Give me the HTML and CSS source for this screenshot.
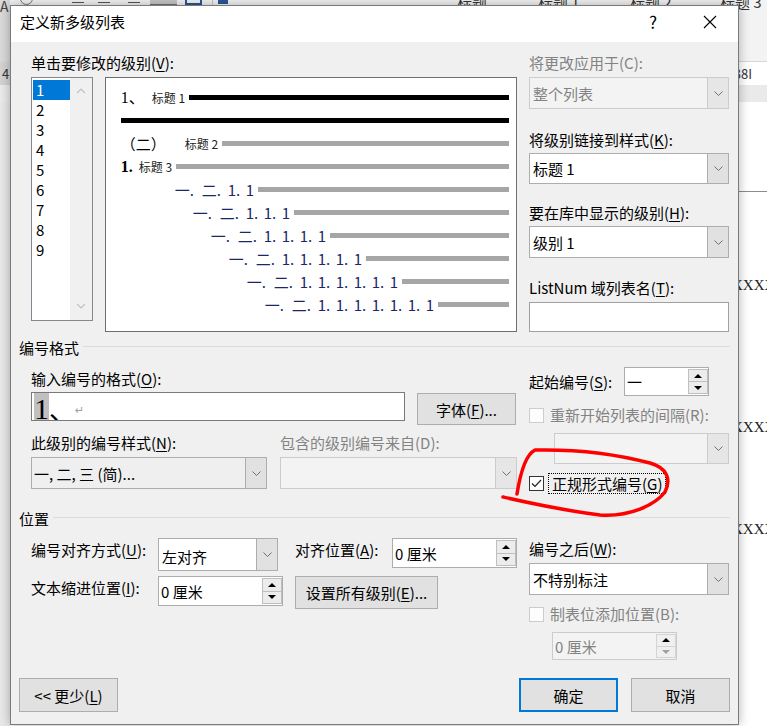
FILE: index.html
```html
<!DOCTYPE html>
<html lang="zh-CN">
<head>
    <meta charset="UTF-8">
    <meta name="viewport" content="width=device-width, initial-scale=1.0">
    <title>定义新多级列表</title>
    <link rel="stylesheet" href="styles.css">
</head>
<body>
    <!-- Word 窗口（对话框后面） -->
    <div class="word">
        <div class="ribbon">
            <span class="rb-a">A</span>
            <div class="rb-tools">
                <span class="ico-circle"></span>
                <span class="ico-line l1"></span>
                <span class="ico-line l2"></span>
                <span class="ico-line l3"></span>
                <span class="ico-box"></span>
                <span class="ico-blue"></span>
                <span class="ico-sep"></span>
                <span class="ico-arrow"></span>
            </div>
            <div class="rb-styles">
                <span class="rb-style w1">标题</span>
                <span class="rb-style w2">标题 1</span>
                <span class="rb-style w3">标题 2</span>
                <span class="rb-style">标题 3</span>
            </div>
        </div>
        <div class="tabbar">
            <span class="tab-l">4</span>
            <span class="tab-r">38I</span>
        </div>
        <div class="toolband"></div>
        <div class="doc">
            <div class="doc-rule"></div>
            <p class="doc-line first">XXXXXXXXXX</p>
            <p class="doc-line second">XXXXXXXXXX</p>
            <p class="doc-line third">XXXXXXXXXX</p>
        </div>
    </div>

    <div class="dialog">
        <div class="titlebar">
            <span class="title">定义新多级列表</span>
            <span class="help">?</span>
            <span class="close">
                <svg width="14" height="14" viewBox="0 0 14 14"><path d="M1 1L13 13M13 1L1 13" stroke="#000" stroke-width="1.1" fill="none"/></svg>
            </span>
        </div>

        <div class="dlg-body">
            <div class="sect sect-top">
                <div class="col-left">
                    <div class="lbl">单击要修改的级别(<u>V</u>):</div>
                    <div class="level-row">
                        <div class="levels">
                            <div class="lv-items">
                                <div class="lv sel">1</div>
                                <div class="lv">2</div>
                                <div class="lv">3</div>
                                <div class="lv">4</div>
                                <div class="lv">5</div>
                                <div class="lv">6</div>
                                <div class="lv">7</div>
                                <div class="lv">8</div>
                                <div class="lv">9</div>
                            </div>
                            <div class="lv-scroll">
                                <svg width="10" height="6" viewBox="0 0 10 6"><polyline points="1,5 5,1 9,5" fill="none" stroke="#c2c2c2" stroke-width="1.2"/></svg>
                                <svg width="10" height="6" viewBox="0 0 10 6"><polyline points="1,1 5,5 9,1" fill="none" stroke="#c2c2c2" stroke-width="1.2"/></svg>
                            </div>
                        </div>

                        <div class="preview">
                            <div class="pv-row">
                                <span class="pv-num n1">1、</span><span class="pv-style">标题 1</span><span class="bar black"></span>
                            </div>
                            <div class="pv-row">
                                <span class="bar black full"></span>
                            </div>
                            <div class="pv-row">
                                <span class="pv-num n2">（二）</span><span class="pv-style">标题 2</span><span class="bar"></span>
                            </div>
                            <div class="pv-row">
                                <span class="pv-num n3">1.</span><span class="pv-style">标题 3</span><span class="bar"></span>
                            </div>
                            <div class="pv-row deep d4">
                                <span class="sg cn">一.</span><span class="sg cn2">二.</span><span class="sg">1.</span><span class="sg last">1</span><span class="bar"></span>
                            </div>
                            <div class="pv-row deep d5">
                                <span class="sg cn">一.</span><span class="sg cn2">二.</span><span class="sg">1.</span><span class="sg">1.</span><span class="sg last">1</span><span class="bar"></span>
                            </div>
                            <div class="pv-row deep d6">
                                <span class="sg cn">一.</span><span class="sg cn2">二.</span><span class="sg">1.</span><span class="sg">1.</span><span class="sg">1.</span><span class="sg last">1</span><span class="bar"></span>
                            </div>
                            <div class="pv-row deep d7">
                                <span class="sg cn">一.</span><span class="sg cn2">二.</span><span class="sg">1.</span><span class="sg">1.</span><span class="sg">1.</span><span class="sg">1.</span><span class="sg last">1</span><span class="bar"></span>
                            </div>
                            <div class="pv-row deep d8">
                                <span class="sg cn">一.</span><span class="sg cn2">二.</span><span class="sg">1.</span><span class="sg">1.</span><span class="sg">1.</span><span class="sg">1.</span><span class="sg">1.</span><span class="sg last">1</span><span class="bar"></span>
                            </div>
                            <div class="pv-row deep d9">
                                <span class="sg cn">一.</span><span class="sg cn2">二.</span><span class="sg">1.</span><span class="sg">1.</span><span class="sg">1.</span><span class="sg">1.</span><span class="sg">1.</span><span class="sg">1.</span><span class="sg last">1</span><span class="bar"></span>
                            </div>
                        </div>
                    </div>
                </div>

                <div class="col-right">
                    <div class="lbl dis">将更改应用于(C):</div>
                    <div class="combo dis c1">
                        <span class="val">整个列表</span>
                        <span class="drop"><svg width="9" height="5" viewBox="0 0 9 5"><polyline points="0.5,0.5 4.5,4.5 8.5,0.5" fill="none" stroke="#707070"/></svg></span>
                    </div>
                    <div class="lbl r2">将级别链接到样式(<u>K</u>):</div>
                    <div class="combo c2">
                        <span class="val">标题 1</span>
                        <span class="drop"><svg width="9" height="5" viewBox="0 0 9 5"><polyline points="0.5,0.5 4.5,4.5 8.5,0.5" fill="none" stroke="#707070"/></svg></span>
                    </div>
                    <div class="lbl r3">要在库中显示的级别(<u>H</u>):</div>
                    <div class="combo c3">
                        <span class="val">级别 1</span>
                        <span class="drop"><svg width="9" height="5" viewBox="0 0 9 5"><polyline points="0.5,0.5 4.5,4.5 8.5,0.5" fill="none" stroke="#707070"/></svg></span>
                    </div>
                    <div class="lbl r4">ListNum 域列表名(<u>T</u>):</div>
                    <div class="textbox listnum"></div>
                </div>
            </div>

            <div class="group-head">编号格式</div>

            <div class="sect sect-format">
                <div class="col-left fmt-left">
                    <div class="lbl">输入编号的格式(<u>O</u>):</div>
                    <div class="fmt-row">
                        <div class="textbox numfmt">
                            <span class="fld">1</span><span class="sep">、</span><span class="ret">↵</span>
                        </div>
                        <button class="btn font-btn">字体(<u>F</u>)...</button>
                    </div>
                    <div class="fmt-row2">
                        <div class="fmt-cell c-style">
                            <div class="lbl">此级别的编号样式(<u>N</u>):</div>
                            <div class="combo plain">
                                <span class="val">一, 二, 三 (简)...</span>
                                <span class="drop"><svg width="9" height="5" viewBox="0 0 9 5"><polyline points="0.5,0.5 4.5,4.5 8.5,0.5" fill="none" stroke="#707070"/></svg></span>
                            </div>
                        </div>
                        <div class="fmt-cell c-from">
                            <div class="lbl dis">包含的级别编号来自(D):</div>
                            <div class="combo dis">
                                <span class="val"></span>
                                <span class="drop"><svg width="9" height="5" viewBox="0 0 9 5"><polyline points="0.5,0.5 4.5,4.5 8.5,0.5" fill="none" stroke="#707070"/></svg></span>
                            </div>
                        </div>
                    </div>
                </div>

                <div class="col-right">
                    <div class="start-row">
                        <span class="lbl start-lbl">起始编号(<u>S</u>):</span>
                        <div class="spin start-spin">
                            <span class="val">一</span>
                            <span class="sp-btns"><span class="sp"><i class="up"></i></span><span class="sp"><i class="dn"></i></span></span>
                        </div>
                    </div>
                    <div class="check-row dis">
                        <span class="cbox"></span><span class="ck-lbl">重新开始列表的间隔(R):</span>
                    </div>
                    <div class="combo dis restart">
                        <span class="val"></span>
                        <span class="drop"><svg width="9" height="5" viewBox="0 0 9 5"><polyline points="0.5,0.5 4.5,4.5 8.5,0.5" fill="none" stroke="#707070"/></svg></span>
                    </div>
                    <div class="check-row legal">
                        <span class="cbox on"><svg width="13" height="13" viewBox="0 0 13 13"><polyline points="2,6.5 5,9.5 11,3" fill="none" stroke="#222" stroke-width="1.2"/></svg></span><span class="ck-lbl focus">正规形式编号(<u>G</u>)</span>
                    </div>
                </div>
            </div>

            <div class="group-head pos-head">位置</div>

            <div class="sect sect-pos">
                <div class="col-left">
                    <div class="pos-row">
                        <span class="lbl pos-lbl">编号对齐方式(<u>U</u>):</span>
                        <div class="combo align-combo">
                            <span class="val">左对齐</span>
                            <span class="drop"><svg width="9" height="5" viewBox="0 0 9 5"><polyline points="0.5,0.5 4.5,4.5 8.5,0.5" fill="none" stroke="#707070"/></svg></span>
                        </div>
                        <span class="lbl pos-lbl2">对齐位置(<u>A</u>):</span>
                        <div class="spin pos-spin">
                            <span class="val">0 厘米</span>
                            <span class="sp-btns"><span class="sp"><i class="up"></i></span><span class="sp"><i class="dn"></i></span></span>
                        </div>
                    </div>
                    <div class="pos-row second">
                        <span class="lbl pos-lbl">文本缩进位置(<u>I</u>):</span>
                        <div class="spin pos-spin">
                            <span class="val">0 厘米</span>
                            <span class="sp-btns"><span class="sp"><i class="up"></i></span><span class="sp"><i class="dn"></i></span></span>
                        </div>
                        <button class="btn all-btn">设置所有级别(<u>E</u>)...</button>
                    </div>
                </div>

                <div class="col-right pos-right">
                    <div class="lbl">编号之后(<u>W</u>):</div>
                    <div class="combo after-combo">
                        <span class="val">不特别标注</span>
                        <span class="drop"><svg width="9" height="5" viewBox="0 0 9 5"><polyline points="0.5,0.5 4.5,4.5 8.5,0.5" fill="none" stroke="#707070"/></svg></span>
                    </div>
                    <div class="check-row dis tab-check">
                        <span class="cbox"></span><span class="ck-lbl">制表位添加位置(B):</span>
                    </div>
                    <div class="spin dis tab-spin">
                        <span class="val">0 厘米</span>
                        <span class="sp-btns"><span class="sp"><i class="up"></i></span><span class="sp"><i class="dn"></i></span></span>
                    </div>
                </div>
            </div>

            <div class="footer">
                <button class="btn">&lt;&lt; 更少(<u>L</u>)</button>
                <button class="btn default">确定</button>
                <button class="btn">取消</button>
            </div>
        </div>
    </div>

    <!-- 红色手绘圈 -->
    <svg class="mark" width="767" height="726" viewBox="0 0 767 726">
        <path d="M503 497 C525 502, 560 510, 600 515 C630 517, 655 505, 665 492 C671 480, 668 468, 650 463 C620 455, 580 449, 535 450 C525 455, 520 475, 517 494" fill="none" stroke="#ff0000" stroke-width="3.5" stroke-linecap="round" stroke-linejoin="round"/>
    </svg>
</body>
</html>
```

FILE: styles.css
```css
* {
    box-sizing: border-box;
}
body {
    margin: 0;
    width: 767px;
    height: 726px;
    overflow: hidden;
    position: relative;
    font-family: "Noto Sans CJK SC", sans-serif;
    font-size: 15px;
    color: #000;
    background: #fff;
}
u {
    text-decoration-thickness: 1px;
    text-underline-offset: 2px;
}

/* ---------- Word window ---------- */
.word {
    height: 726px;
    display: flex;
    flex-direction: column;
}
.ribbon {
    height: 62px;
    background: #f3f3f3;
    border-bottom: 1px solid #d6d6d6;
    display: flex;
    align-items: flex-start;
    overflow: hidden;
}
.rb-a {
    width: 10px;
    height: 61px;
    background: #d9d9d9;
    color: #444;
    font-size: 14px;
    line-height: 12px;
    overflow: hidden;
}
.rb-tools {
    width: 447px;
    display: flex;
    align-items: flex-start;
}
.ico-circle {
    width: 13px;
    height: 13px;
    margin: -8px 0 0 10px;
    border: 1px solid #777;
    border-radius: 50%;
}
.ico-line {
    width: 12px;
    height: 1px;
    margin-top: 2px;
    background: #555;
}
.l1 { margin-left: 39px; }
.l2 { margin-left: 14px; }
.l3 { margin-left: 18px; }
.ico-box {
    width: 27px;
    height: 5px;
    margin-left: 10px;
    background: #c6c6c6;
    border-bottom: 1px solid #777;
}
.ico-blue {
    width: 17px;
    height: 5px;
    margin-left: 8px;
    border: 2px solid #2b579a;
    border-top: 0;
}
.ico-sep {
    width: 1px;
    height: 6px;
    margin-left: 10px;
    background: #c8c8c8;
}
.ico-arrow {
    width: 10px;
    height: 4px;
    margin-left: 5px;
    background: #2b579a;
}
.rb-styles {
    display: flex;
    margin-top: -6px;
    color: #333;
    line-height: 16px;
    white-space: nowrap;
}
.rb-style.w1 { width: 81px; }
.rb-style.w2 { width: 92px; }
.rb-style.w3 { width: 90px; }

.tabbar {
    height: 23px;
    display: flex;
    background: #fff;
    font-size: 13px;
    line-height: 23px;
    color: #333;
}
.tab-l {
    width: 10px;
    background: #d3d3d3;
    padding-left: 2px;
}
.tab-r {
    margin-left: auto;
    margin-right: 15px;
}
.toolband {
    height: 17px;
    background: #eaeaea;
}
.doc {
    flex: 1;
    background: #fff;
    border-left: 10px solid #e8e8e8;
}
.doc-rule {
    margin-top: 89px;
    border-top: 1px solid #8c8c8c;
}
.doc-line {
    margin: 0;
    padding-left: 722px;
    white-space: nowrap;
    overflow: hidden;
    font-family: "Liberation Serif", serif;
    font-size: 15px;
    line-height: 20px;
    color: #222;
}
.doc-line.first { margin-top: 83px; }
.doc-line.second { margin-top: 122px; }
.doc-line.third { margin-top: 82px; }

/* ---------- Dialog ---------- */
.dialog {
    position: absolute;
    left: 10px;
    top: 5px;
    width: 729px;
    height: 720px;
    border: 1px solid #7a7a7a;
    box-shadow: 0 0 10px rgba(0, 0, 0, 0.3);
    background: #f0f0f0;
    display: flex;
    flex-direction: column;
}
.titlebar {
    height: 36px;
    background: #fff;
    display: flex;
    align-items: flex-start;
    padding: 6px 13px 0 9px;
}
.title {
    line-height: 20px;
}
.help {
    margin-left: auto;
    width: 20px;
    text-align: center;
    font-size: 17px;
    line-height: 20px;
}
.close {
    width: 30px;
    margin-left: 32px;
    height: 20px;
    display: flex;
    align-items: center;
    justify-content: center;
}
.dlg-body {
    flex: 1;
    padding: 11px 8px 0 8px;
}
.sect {
    display: flex;
    gap: 12px;
    padding-left: 12px;
}
.col-left {
    width: 486px;
}
.col-right {
    width: 200px;
}
.lbl {
    height: 20px;
    line-height: 20px;
    white-space: nowrap;
}
.dis {
    color: #838383;
}

/* level list + preview */
.level-row {
    display: flex;
    gap: 12px;
    margin-top: 4px;
}
.levels {
    width: 62px;
    height: 244px;
    border: 1px solid #828790;
    background: #fff;
    display: flex;
}
.lv-items {
    width: 38px;
    padding: 2px 0 0 1px;
}
.lv {
    width: 37px;
    height: 20px;
    line-height: 20px;
    padding-left: 3px;
}
.lv.sel {
    background: #0078d7;
    color: #fff;
}
.lv-scroll {
    flex: 1;
    background: #f0f0f0;
    display: flex;
    flex-direction: column;
    justify-content: space-between;
    align-items: center;
    padding: 10px 0 11px 0;
}
.preview {
    width: 414px;
    height: 255px;
    border: 1px solid #6e6e6e;
    background: #fff;
    padding: 8px 7px 0 15px;
}
.pv-row {
    height: 23px;
    display: flex;
    align-items: center;
    white-space: nowrap;
}
.pv-num {
    flex: none;
    line-height: 20px;
}
.pv-num.n1 {
    width: 31px;
    font-family: "Liberation Serif", "Noto Sans CJK SC", serif;
    font-size: 16px;
}
.pv-num.n2 {
    width: 64px;
}
.pv-num.n3 {
    width: 18px;
    font-family: "Liberation Serif", serif;
    font-weight: bold;
    font-size: 16px;
}
.pv-style {
    font-size: 12px;
    color: #222;
}
.bar {
    flex: 1;
    height: 5px;
    margin-left: 4px;
    background: #a6a6a6;
}
.bar.black {
    background: #000;
}
.bar.full {
    margin-left: 0;
}
.deep {
    color: #1b2868;
}
.d4 { padding-left: 54px; }
.d5 { padding-left: 72px; }
.d6 { padding-left: 90px; }
.d7 { padding-left: 108px; }
.d8 { padding-left: 126px; }
.d9 { padding-left: 144px; }
.sg {
    flex: none;
    width: 18px;
    line-height: 20px;
}
.sg.cn { width: 27px; }
.sg.cn2 { width: 26px; }
.sg.last { width: 8px; }

/* combos / inputs */
.combo {
    display: flex;
    border: 1px solid #adadad;
    background: #fff;
}
.combo .val {
    flex: 1;
    display: flex;
    align-items: center;
    padding-left: 3px;
    white-space: nowrap;
    overflow: hidden;
}
.combo .drop {
    width: 21px;
    background: #e1e1e1;
    border-left: 1px solid #adadad;
    display: flex;
    align-items: center;
    justify-content: center;
}
.combo.dis {
    border-color: #cccccc;
    background: #f3f3f3;
}
.combo.dis .drop {
    background: #e6e6e6;
    border-left-color: #cccccc;
}
.combo.plain {
    background: #efefef;
}
.c1 { height: 32px; margin-top: 4px; }
.lbl.r2 { margin-top: 21px; }
.c2 { height: 31px; margin-top: 3px; }
.lbl.r3 { margin-top: 19px; }
.c3 { height: 32px; margin-top: 3px; }
.lbl.r4 { margin-top: 20px; }
.textbox {
    border: 1px solid #a0a0a0;
    background: #fff;
}
.listnum {
    height: 30px;
    margin-top: 4px;
}

.group-head {
    display: flex;
    align-items: center;
    height: 20px;
    line-height: 20px;
    margin-top: 6px;
}
.group-head::after {
    content: "";
    flex: 1;
    height: 1px;
    margin: -4px 0 0 4px;
    background: #dcdcdc;
}
.group-head.pos-head {
    margin-top: 16px;
}

/* numbering format */
.sect-format {
    margin-top: 9px;
}
.fmt-left {
    padding-top: 2px;
}
.fmt-row {
    display: flex;
    align-items: flex-start;
    gap: 12px;
    margin-top: 3px;
}
.numfmt {
    width: 374px;
    height: 29px;
    border-color: #7a7a7a;
    display: flex;
    align-items: flex-start;
    overflow: hidden;
    padding-left: 2px;
}
.fld {
    background: #c0c0c0;
    font-family: "Liberation Serif", serif;
    font-size: 30px;
    line-height: 31px;
    height: 27px;
    overflow: hidden;
}
.sep {
    width: 26px;
    font-size: 26px;
    line-height: 31px;
    height: 27px;
    overflow: hidden;
}
.ret {
    align-self: flex-end;
    font-family: "DejaVu Sans", sans-serif;
    font-size: 11px;
    line-height: 14px;
    color: #a0a0a0;
    margin-bottom: 2px;
}
.btn {
    font-family: inherit;
    font-size: 15px;
    color: #000;
    background: #e1e1e1;
    border: 1px solid #adadad;
    padding: 0;
    height: 34px;
    width: 99px;
    white-space: nowrap;
}
.font-btn {
    height: 32px;
    margin-top: 1px;
}
.fmt-row2 {
    display: flex;
    gap: 13px;
    margin-top: 8px;
}
.c-style { width: 236px; }
.c-from { width: 237px; }
.fmt-cell .combo {
    height: 32px;
    margin-top: 4px;
}
.fmt-cell .combo .val {
    padding-left: 2px;
}

.start-row {
    display: flex;
    align-items: center;
    height: 29px;
}
.start-lbl {
    width: 95px;
}
.spin {
    display: flex;
    border: 1px solid #adadad;
    background: #fff;
}
.spin .val {
    flex: 1;
    display: flex;
    align-items: center;
    padding-left: 2px;
    white-space: nowrap;
}
.sp-btns {
    width: 20px;
    display: flex;
    flex-direction: column;
    padding: 1px 0 1px 0;
}
.sp {
    flex: 1;
    display: flex;
    align-items: center;
    justify-content: center;
    background: #ececec;
    border: 1px solid #bfbfbf;
}
.sp + .sp {
    border-top: 0;
}
.sp .up {
    width: 0;
    height: 0;
    border-left: 4px solid transparent;
    border-right: 4px solid transparent;
    border-bottom: 4px solid #000;
}
.sp .dn {
    width: 0;
    height: 0;
    border-left: 4px solid transparent;
    border-right: 4px solid transparent;
    border-top: 4px solid #000;
}
.start-spin {
    width: 85px;
    height: 29px;
}
.check-row {
    display: flex;
    align-items: center;
    height: 20px;
    margin-top: 9px;
    white-space: nowrap;
}
.cbox {
    width: 15px;
    height: 15px;
    border: 1px solid #cccccc;
    background: #fdfdfd;
    display: flex;
    align-items: center;
    justify-content: center;
}
.cbox.on {
    border-color: #333;
    background: #fff;
}
.ck-lbl {
    margin-left: 6px;
    line-height: 20px;
}
.ck-lbl.focus {
    margin-left: 4px;
    padding: 0 2px 0 3px;
    line-height: 19px;
    border: 1px dotted #000;
}
.legal {
    margin-top: 9px;
    color: #000;
}
.restart {
    height: 31px;
    width: 175px;
    margin: 8px 0 0 25px;
}

/* position */
.sect-pos {
    margin-top: 9px;
}
.pos-row {
    display: flex;
    align-items: flex-start;
}
.pos-row.second {
    margin-top: 5px;
}
.pos-lbl {
    width: 127px;
    margin-top: 2px;
}
.pos-lbl2 {
    width: 97px;
    margin: 2px 0 0 17px;
}
.align-combo {
    width: 120px;
    height: 33px;
}
.align-combo .val {
    padding-top: 3px;
}
.pos-spin {
    width: 125px;
    height: 30px;
}
.all-btn {
    width: 143px;
    height: 33px;
    margin-left: 12px;
}
.pos-right {
    padding-top: 1px;
}
.after-combo {
    height: 32px;
    margin-top: 4px;
}
.tab-check {
    margin-top: 9px;
}
.tab-spin {
    width: 125px;
    height: 28px;
    margin: 8px 0 0 23px;
    border-color: #cccccc;
    background: #f3f3f3;
    color: #838383;
}
.tab-spin .sp {
    background: #f0f0f0;
    border-color: #d4d4d4;
}
.tab-spin .sp .dn {
    border-top-color: #a0a0a0;
}

.footer {
    display: flex;
    margin-top: 18px;
    gap: 13px;
}
.footer .default {
    margin-left: auto;
    border: 2px solid #0078d7;
}

.mark {
    position: absolute;
    left: 0;
    top: 0;
    pointer-events: none;
}
```
